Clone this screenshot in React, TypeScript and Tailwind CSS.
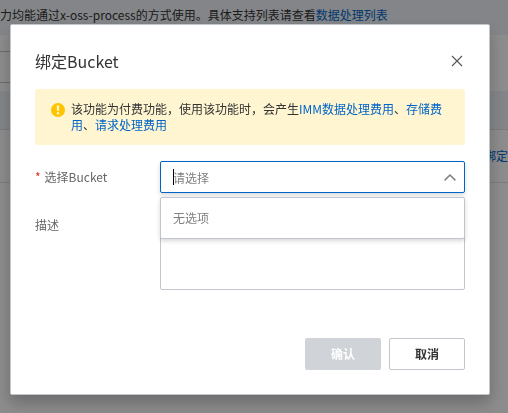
import { useState } from 'react';

function PageBackground() {
  return (
    <div className="min-h-screen overflow-hidden bg-white">
      <div className="h-[35px] whitespace-nowrap bg-[#eff3f8] pt-1.5 text-xs leading-[18px] text-[#333]">
        力均能通过x-oss-process的方式使用。具体支持列表请查看
        <a href="#data-processing" className="text-[#0064c8]">数据处理列表</a>
      </div>
      <div className="h-14 pt-4">
        <input
          type="text"
          aria-label="搜索"
          className="block h-8 w-40 border-y border-[#c0c6cc] outline-none"
        />
      </div>
      <table className="w-full border-collapse text-xs">
        <thead>
          <tr className="h-[38px] border-b border-[#dde1e6] bg-[#eff3f8]">
            <th aria-label="Bucket" />
            <th aria-label="操作" />
          </tr>
        </thead>
        <tbody>
          <tr className="h-[53px] border-b border-[#dde1e6]">
            <td />
            <td className="p-0 text-right">
              <a href="#bind" className="text-[#0064c8]">绑定</a>
            </td>
          </tr>
        </tbody>
      </table>
    </div>
  );
}

function WarningIcon() {
  return (
    <svg viewBox="0 0 14 14" className="mt-0.5 size-3.5 shrink-0" aria-hidden="true">
      <circle cx="7" cy="7" r="7" fill="#ffc400" />
      <path d="M5.8 2.6h2.4l-.3 5.4H6.1z" fill="#fff6d3" />
      <circle cx="7" cy="10.3" r="1.2" fill="#fff6d3" />
    </svg>
  );
}

function FeeNotice() {
  return (
    <div role="alert" className="flex gap-1.5 rounded-xs bg-[#fff5d1] py-3 pr-3 pl-4 text-xs leading-4 text-[#333]">
      <WarningIcon />
      <p>
        该功能为付费功能，使用该功能时，会产生
        <a href="#imm" className="text-[#0064c8]">IMM数据处理费用</a>、
        <a href="#storage" className="text-[#0064c8]">存储费用</a>、
        <a href="#request" className="text-[#0064c8]">请求处理费用</a>
      </p>
    </div>
  );
}

function BucketSelect() {
  const [open, setOpen] = useState(true);
  const [keyword, setKeyword] = useState('');

  return (
    <div className="relative min-w-0 flex-1">
      <input
        id="bucket"
        type="text"
        role="combobox"
        aria-expanded={open}
        aria-controls="bucket-options"
        placeholder="请选择"
        value={keyword}
        onChange={(e) => setKeyword(e.target.value)}
        onClick={() => setOpen(!open)}
        className="block h-8 w-full rounded-xs border border-[#0064c8] bg-white pr-8 pl-3 text-xs text-[#333] caret-transparent shadow-[0_2px_4px_rgba(0,0,0,0.16)] outline-none placeholder:text-[#808080]"
      />
      {open && !keyword && <span className="absolute top-2 left-[13px] h-4 w-px bg-black" />}
      <svg
        viewBox="0 0 12 8"
        className="pointer-events-none absolute top-3 right-[9px] h-2 w-3"
        fill="none"
        stroke="#808080"
        strokeWidth="1.5"
        aria-hidden="true"
      >
        <path d="M.6 7.4 6 2 11.4 7.4" />
      </svg>
      {open && (
        <ul
          id="bucket-options"
          role="listbox"
          className="absolute inset-x-0 top-9 rounded-xs border border-[#c0c6cc] bg-white p-3 text-xs leading-4 text-[#808080] shadow-[0_2px_4px_rgba(0,0,0,0.16)]"
        >
          <li>无选项</li>
        </ul>
      )}
    </div>
  );
}

function BindBucketDialog() {
  return (
    <div
      role="dialog"
      aria-labelledby="dialog-title"
      className="w-full max-w-[480px] rounded-xs border border-[#c0c6cc] bg-white p-6 shadow-[0_8px_16px_rgba(0,0,0,0.24)]"
    >
      <div className="flex h-6 items-center justify-between">
        <h2 id="dialog-title" className="text-base leading-6 text-[#333]">绑定Bucket</h2>
        <button type="button" aria-label="关闭" className="flex size-4 items-center justify-center">
          <svg viewBox="0 0 12 12" className="size-3" fill="none" stroke="#555" strokeWidth="1.1" aria-hidden="true">
            <path d="M1 1l10 10M11 1 1 11" />
          </svg>
        </button>
      </div>

      <form className="mt-4" onSubmit={(e) => e.preventDefault()}>
        <FeeNotice />

        <div className="mt-4 flex text-xs leading-8 text-[#666]">
          <label htmlFor="bucket" className="w-[125px] shrink-0">
            <span className="mr-1 text-[#d93026]">*</span>
            选择Bucket
          </label>
          <BucketSelect />
        </div>

        <div className="mt-4 flex text-xs leading-8 text-[#666]">
          <label htmlFor="description" className="w-[125px] shrink-0">描述</label>
          <textarea
            id="description"
            className="block h-[81px] min-w-0 flex-1 resize-none rounded-xs border border-[#c0c6cc] px-3 py-2 leading-4 outline-none"
          />
        </div>

        <div className="mt-12 flex justify-end gap-2 text-xs font-bold">
          <button type="submit" disabled className="h-8 w-[76px] rounded-xs bg-[#d0d4d9] text-white">
            确认
          </button>
          <button type="button" className="h-8 w-[76px] rounded-xs border border-[#c0c6cc] bg-white text-[#333]">
            取消
          </button>
        </div>
      </form>
    </div>
  );
}

export default function App() {
  return (
    <div className="font-['Noto_Sans_CJK_SC',sans-serif]">
      <PageBackground />
      <div className="fixed inset-0 flex items-start justify-center bg-black/45 pt-6 pr-[18px] pl-2.5">
        <BindBucketDialog />
      </div>
    </div>
  );
}
